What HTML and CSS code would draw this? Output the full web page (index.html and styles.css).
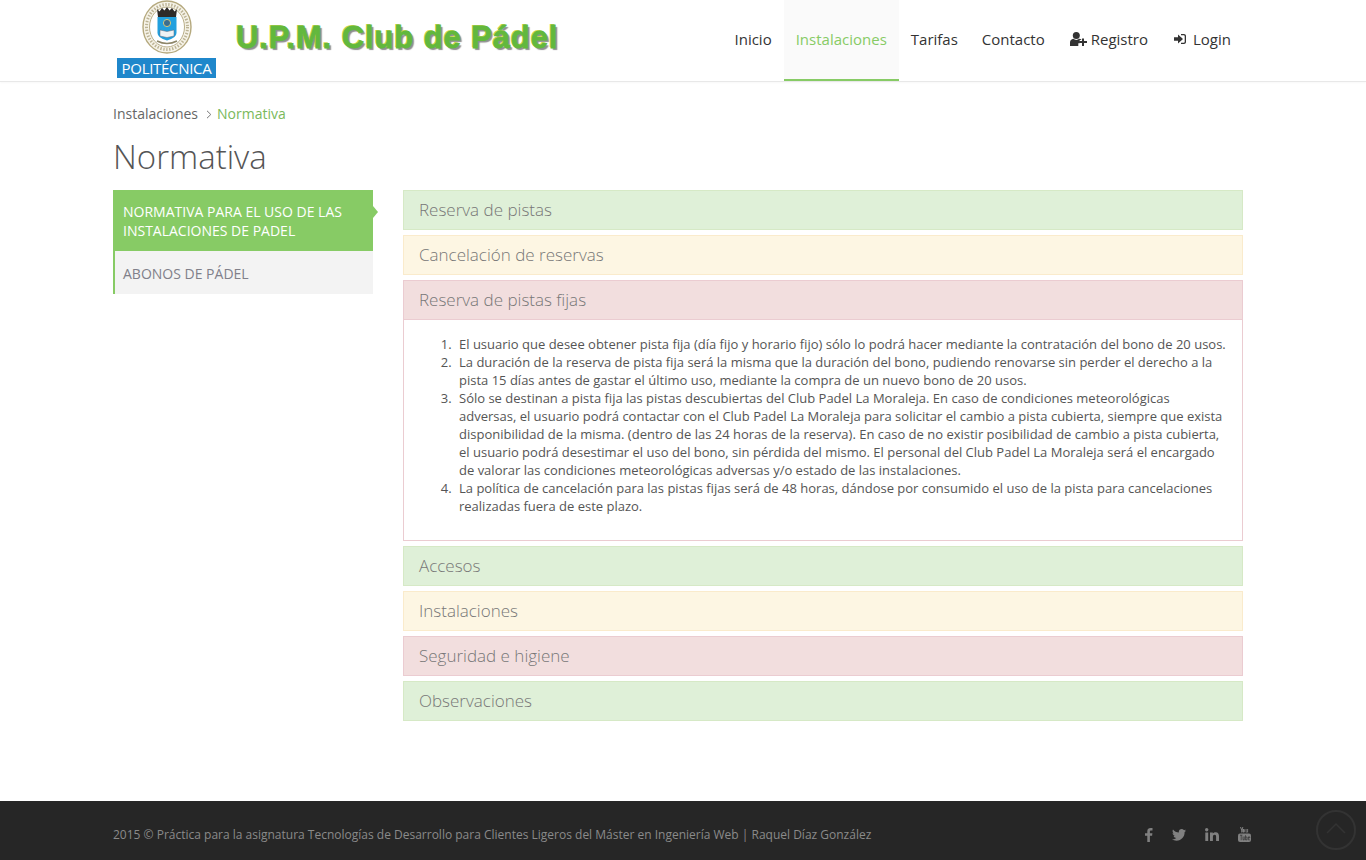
FILE: index.html
```html
<!DOCTYPE html>
<html lang="es">
<head>
<meta charset="utf-8">
<title>Normativa</title>
<link rel="stylesheet" href="styles.css">
</head>
<body>
<header class="site-header">
  <div class="container header-inner">
    <div class="brand">
      <div class="logo">
        <svg class="crest" width="52" height="54" viewBox="0 0 52 54">
          <ellipse cx="26" cy="27" rx="24" ry="26" fill="#f6f3e8" stroke="#b5a97e" stroke-width="1.400"/>
          <ellipse cx="26" cy="27" rx="20.500" ry="22.500" fill="none" stroke="#a89d78" stroke-width="3" stroke-dasharray="1.400 1.600" opacity=".75"/>
          <ellipse cx="26" cy="27" rx="17.500" ry="20" fill="#fff" stroke="#b9ae88" stroke-width="1"/>
          <path d="M16 9l2.500 2.500L21 8l2.500 2.500L26 7l2.500 3.500L31 8l2.500 3.500L36 9l-1 8H17z" fill="#2e2a28"/>
          <path d="M16.500 17h19v16q0 5-9.500 7.500q-9.500-2.500-9.500-7.500z" fill="#22a0de"/>
          <circle cx="26" cy="23" r="3.600" fill="#3b6e8f" stroke="#d5c77f"/>
          <path d="M19 30l7 1.500 7-1.500v6l-7 1.500-7-1.500z" fill="#eef3f5" stroke="#667" stroke-width=".5"/>
          <path d="M16 41q10 5 20 0" fill="none" stroke="#8d8668" stroke-width="1.500"/>
        </svg>
        <div class="logo-label">POLITÉCNICA</div>
      </div>
      <div class="club-title">U.P.M. Club de Pádel</div>
    </div>
    <nav class="main-nav">
      <a class="nav-item" href="#">Inicio</a>
      <a class="nav-item active" href="#">Instalaciones</a>
      <a class="nav-item" href="#">Tarifas</a>
      <a class="nav-item" href="#">Contacto</a>
      <a class="nav-item" href="#">
        <svg class="nav-icon" width="17" height="14" viewBox="0 0 17 14"><circle cx="6.300" cy="3.600" r="3.500" fill="#333"/><path d="M0 14v-3.500C0 8.500 1.500 7 3.300 6.800 4.200 7.500 5.200 7.900 6.300 7.900s2.100-.4 3-1.100c.9.100 1.700.5 2.300 1.100H9.700v3.400H8.300v2.700H0z" fill="#333"/><path d="M12 6.500h2v2.500h3v2h-3v2.900h-2V11H9.200V9H12z" fill="#333"/></svg>
        Registro</a>
      <a class="nav-item login" href="#">
        <svg class="nav-icon" width="12" height="12" viewBox="0 0 12 12"><path d="M0 4.300h4V1.500L9 6l-5 4.500V7.700H0z" fill="#333"/><path d="M7 1h3c1 0 2 .8 2 2v6c0 1.200-1 2-2 2H7V9.700h2.800c.5 0 .9-.3.900-.8V3.100c0-.5-.4-.8-.9-.8H7z" fill="#333"/></svg>
        Login</a>
    </nav>
  </div>
</header>

<main class="container page">
  <div class="breadcrumb">
    <a href="#">Instalaciones</a>
    <svg class="crumb-sep" width="6" height="9" viewBox="0 0 6 9"><path d="M1 .8L4.800 4.500 1 8.200" fill="none" stroke="#777" stroke-width="1"/></svg>
    <span class="crumb-current">Normativa</span>
  </div>
  <h1 class="page-title">Normativa</h1>
  <div class="content">
    <aside class="side-menu">
      <a class="side-item selected" href="#">Normativa para el uso de las instalaciones de padel</a>
      <a class="side-item" href="#">Abonos de pádel</a>
    </aside>
    <section class="accordion">
      <div class="panel success"><div class="panel-heading">Reserva de pistas</div></div>
      <div class="panel warning"><div class="panel-heading">Cancelación de reservas</div></div>
      <div class="panel danger">
        <div class="panel-heading">Reserva de pistas fijas</div>
        <div class="panel-body">
          <ol>
            <li>El usuario que desee obtener pista fija (día fijo y horario fijo) sólo lo podrá hacer mediante la contratación del bono de 20 usos.</li>
            <li>La duración de la reserva de pista fija será la misma que la duración del bono, pudiendo renovarse sin perder el derecho a la pista 15 días antes de gastar el último uso, mediante la compra de un nuevo bono de 20 usos.</li>
            <li>Sólo se destinan a pista fija las pistas descubiertas del Club Padel La Moraleja. En caso de condiciones meteorológicas adversas, el usuario podrá contactar con el Club Padel La Moraleja para solicitar el cambio a pista cubierta, siempre que exista disponibilidad de la misma. (dentro de las 24 horas de la reserva). En caso de no existir posibilidad de cambio a pista cubierta, el usuario podrá desestimar el uso del bono, sin pérdida del mismo. El personal del Club Padel La Moraleja será el encargado de valorar las condiciones meteorológicas adversas y/o estado de las instalaciones.</li>
            <li>La política de cancelación para las pistas fijas será de 48 horas, dándose por consumido el uso de la pista para cancelaciones realizadas fuera de este plazo.</li>
          </ol>
        </div>
      </div>
      <div class="panel success"><div class="panel-heading">Accesos</div></div>
      <div class="panel warning"><div class="panel-heading">Instalaciones</div></div>
      <div class="panel danger"><div class="panel-heading">Seguridad e higiene</div></div>
      <div class="panel success"><div class="panel-heading">Observaciones</div></div>
    </section>
  </div>
</main>

<footer class="site-footer">
  <div class="container footer-inner">
    <p class="copyright">2015 © Práctica para la asignatura Tecnologías de Desarrollo para Clientes Ligeros del Máster en Ingeniería Web | Raquel Díaz González</p>
    <div class="social">
      <svg width="8" height="14" viewBox="0 0 8 14"><path d="M2.300 14V7.700H0V5.200h2.300V3.300C2.300 1.100 3.700 0 5.600 0c.9 0 1.700.1 1.900.1v2.300H6.200c-1 0-1.300.5-1.300 1.300v1.500h2.500l-.3 2.500H4.900V14z" fill="#808080"/></svg>
      <svg width="14" height="12" viewBox="0 0 14 12"><path d="M14 1.500c-.5.200-1.100.4-1.700.5.600-.4 1-1 1.300-1.600-.6.300-1.200.6-1.800.7C11.200.400 10.500 0 9.700 0 8.100 0 6.800 1.300 6.800 2.900c0 .2 0 .4.100.7C4.500 3.500 2.400 2.300 1 .5.700 1 .6 1.500.6 2c0 1 .5 1.900 1.300 2.400-.5 0-.9-.1-1.300-.4 0 1.400 1 2.600 2.300 2.900-.5.100-.9.100-1.300 0 .4 1.200 1.400 2 2.700 2C3.200 10 1.600 10.500 0 10.300 1.300 11.200 2.800 11.700 4.400 11.700c5.300 0 8.200-4.400 8.200-8.200v-.4c.6-.4 1-.9 1.400-1.600z" fill="#808080"/></svg>
      <svg width="14" height="13" viewBox="0 0 14 13"><circle cx="1.700" cy="1.700" r="1.700" fill="#808080"/><path d="M.3 4.400h2.900V13H.3zM5 4.400h2.800v1.200c.5-.8 1.500-1.400 2.800-1.400 2.600 0 3.400 1.700 3.400 4.100V13h-2.900V8.700c0-1.100-.3-2-1.400-2-1.200 0-1.800.9-1.800 2V13H5z" fill="#808080"/></svg>
      <svg width="13" height="15" viewBox="0 0 13 15"><path d="M2 0h1l.7 2L4.400 0h1L4.200 3.200V5.500h-1V3.200zM5.600 2c.8 0 1.200.5 1.200 1.200v1.200c0 .7-.4 1.200-1.200 1.200s-1.200-.5-1.200-1.200V3.200C4.400 2.500 4.800 2 5.600 2zM7.600 2h.9v2.700c0 .3.300.3.700-.1V2h.9v3.500h-.9v-.4c-.8.800-1.600.6-1.600-.2z" fill="#808080"/><rect y="6.500" width="13" height="8.500" rx="2" fill="#808080"/><path d="M2 8.200h2.400M3.200 8.200v5M5 9.500v3.300h1.300V9.500M7.500 8.200v4.700M7.500 10h1.500v2.800H7.500M10 10.800h1.800v-.9h-1.500v2.900h1.500" fill="none" stroke="#262626" stroke-width=".6"/></svg>
    </div>
  </div>
  <a class="to-top" href="#" aria-label="Subir">
    <svg width="40" height="40" viewBox="0 0 40 40"><circle cx="20" cy="20" r="19" fill="none" stroke="#333" stroke-width="2"/><path d="M11 23l9-9 9 9" fill="none" stroke="#333" stroke-width="1.500"/></svg>
  </a>
</footer>
</body>
</html>
```
FILE: styles.css
```css
* { box-sizing: border-box; }
html, body { margin: 0; padding: 0; }
body {
  font-family: "Open Sans", "Liberation Sans", sans-serif;
  font-size: 14px;
  color: #555;
  background: #fff;
}
a { text-decoration: none; color: inherit; }
.container { width: 1140px; margin: 0 auto; }

.site-header {
  height: 82px;
  border-bottom: 1px solid #e8e8e8;
  box-shadow: 0 1px 2px rgba(0,0,0,.03);
}
.header-inner {
  display: flex;
  justify-content: space-between;
  height: 81px;
  padding-right: 10px;
}
.brand { display: flex; align-items: flex-start; }
.logo {
  width: 99px;
  margin-left: 4px;
  display: flex;
  flex-direction: column;
  align-items: center;
}
.crest { display: block; margin-bottom: 4px; }
.logo-label {
  width: 99px;
  height: 20px;
  background: #1f87cb;
  color: #fff;
  font-family: "Open Sans", sans-serif;
  font-size: 15px;
  line-height: 20px;
  letter-spacing: -.3px;
  text-align: center;
}
.club-title {
  margin: 17px 0 0 20px;
  font-family: "Liberation Sans", sans-serif;
  font-weight: 700;
  font-size: 31px;
  line-height: 41px;
  letter-spacing: .9px;
  color: #62b83d;
  -webkit-text-stroke: .8px #62b83d;
  white-space: nowrap;
  text-shadow: -1px -1px 0 #c9d84e, 2px 2px 1px #8f8f8f;
}
.main-nav { display: flex; height: 81px; }
.nav-item {
  display: flex;
  align-items: center;
  padding: 0 12px;
  font-size: 15px;
  line-height: 20px;
  color: #333;
  height: 81px;
  padding-bottom: 2px;
  border-bottom: 2px solid transparent;
}
.nav-item.active {
  background: #fafafa;
  color: #87cb65;
  border-bottom-color: #87cb65;
}
.nav-icon { margin: 0 4px 0 1px; }
.login .nav-icon { margin: 0 7px 0 2px; }

.page { padding-bottom: 80px; }
.breadcrumb {
  display: flex;
  align-items: center;
  margin-top: 22px;
  line-height: 20px;
  color: #666;
}
.crumb-sep { margin: 1px 5px 0 8px; }
.crumb-current { color: #7ab95a; }
.page-title {
  margin: 12px 0 12px;
  font-size: 33px;
  font-weight: 300;
  line-height: 42px;
  color: #555;
}
.content { display: flex; align-items: flex-start; gap: 30px; }
.side-menu { width: 260px; flex: none; }
.side-item {
  display: block;
  padding: 13px 10px 11px 8px;
  border-left: 2px solid #87cb65;
  background: #f3f3f3;
  color: #80808a;
  font-size: 14px;
  line-height: 19px;
  text-transform: uppercase;
}
.side-item.selected {
  position: relative;
  padding-top: 12px;
  padding-bottom: 11px;
  background: #87cb65;
  color: #fff;
}
.side-item.selected::after {
  content: "";
  position: absolute;
  left: 100%;
  top: 16px;
  border-left: 5px solid #87cb65;
  border-top: 6px solid transparent;
  border-bottom: 6px solid transparent;
}
.accordion { width: 840px; display: flex; flex-direction: column; gap: 5px; }
.panel { border: 1px solid; }
.panel.success { border-color: #d6e9c6; }
.panel.warning { border-color: #faebcc; }
.panel.danger { border-color: #ebccd1; }
.panel-heading {
  height: 38px;
  padding: 0 15px;
  font-size: 17px;
  font-weight: 300;
  line-height: 38px;
  color: #777;
}
.success .panel-heading { background: #dff0d8; }
.warning .panel-heading { background: #fdf6e3; }
.danger .panel-heading { background: #f2dede; }
.panel-body {
  padding: 15px;
  border-top: 1px solid #ebccd1;
}
.panel-body ol {
  margin: 0 0 10px;
  padding-left: 36px;
  font-size: 13px;
  line-height: 18px;
  color: #555;
}
.panel-body li { padding-left: 4px; }
.site-footer {
  position: relative;
  height: 59px;
  background: #262626;
}
.footer-inner {
  display: flex;
  align-items: center;
  justify-content: space-between;
  height: 59px;
  padding-top: 8px;
  padding-right: 2px;
}
.copyright {
  margin: 0;
  font-size: 12px;
  color: #8a8a8a;
}
.social { display: flex; align-items: center; gap: 19px; }
.to-top {
  position: absolute;
  right: 10px;
  top: 9px;
  width: 40px;
  height: 40px;
}
```
